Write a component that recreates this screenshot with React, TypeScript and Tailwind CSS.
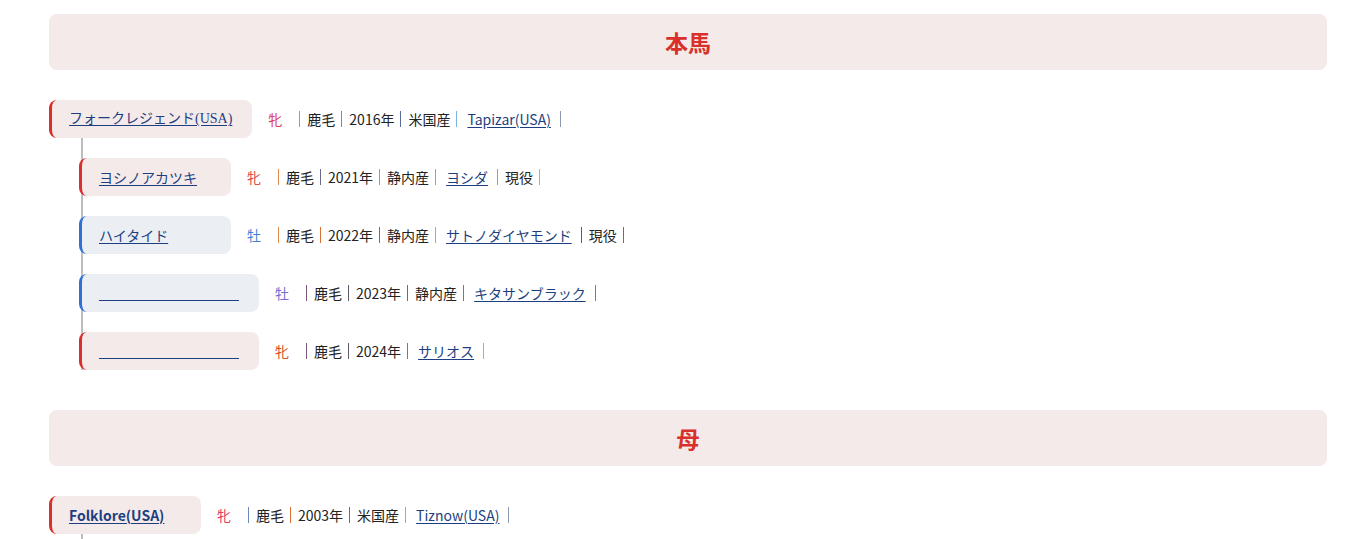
import React from "react";

type Item = { text: string; link?: boolean; sep: string };
type Row = {
  name: string;
  empty?: boolean;
  female: boolean;
  sexColor: string;
  firstSep: string;
  items: Item[];
  lastSep: string;
  nameFont?: "serif" | "bold";
};

const FONT = "font-['Noto_Sans_CJK_JP','Noto_Sans',sans-serif]";

function Sep({ color }: { color: string }) {
  return <span className="inline-block w-px h-[16px]" style={{ backgroundColor: color }} />;
}

function HorseRow({ row }: { row: Row }) {
  const boxCls = row.female
    ? "bg-[#f5eaea] border-[#d9302c]"
    : "bg-[#ebeff4] border-[#2f6fd6]";
  const nameCls =
    row.nameFont === "serif"
      ? "font-['Liberation_Serif','Noto_Sans_CJK_JP',serif]"
      : row.nameFont === "bold"
      ? "font-bold"
      : "";
  return (
    <div className="flex items-center h-[38px]">
      <div
        className={`h-[38px] min-w-[152px] flex items-center pl-[17px] pr-5 rounded-lg border-l-[3px] ${boxCls}`}
      >
        {row.empty ? (
          <a href="#" className="inline-block w-[140px] h-[15px] border-b border-[#1d3f7f]" />
        ) : (
          <a
            href="#"
            className={`text-[14px] leading-[20px] text-[#1d3f7f] underline underline-offset-2 ${nameCls}`}
          >
            {row.name}
          </a>
        )}
      </div>
      <span
        className="ml-4 w-[31px] text-[14px] leading-[20px]"
        style={{ color: row.sexColor }}
      >
        {row.female ? "牝" : "牡"}
      </span>
      <div className="flex items-center text-[14px] leading-[20px] text-[#222]">
        {row.items.map((it, i) => (
          <React.Fragment key={i}>
            <Sep color={i === 0 ? row.firstSep : row.items[i - 1].sep} />
            {it.link ? (
              <a href="#" className="ml-[10px] mr-[9px] text-[#1d3f7f] underline underline-offset-2">
                {it.text}
              </a>
            ) : (
              <span className="pl-[7px] pr-[6px]">{it.text}</span>
            )}
          </React.Fragment>
        ))}
        <Sep color={row.lastSep} />
      </div>
    </div>
  );
}

const parent1: Row = {
  name: "フォークレジェンド(USA)",
  female: true,
  sexColor: "#e0405e",
  firstSep: "#e08a4a",
  nameFont: "serif",
  items: [
    { text: "鹿毛", sep: "#d9703a" },
    { text: "2016年", sep: "#5a6a9a" },
    { text: "米国産", sep: "#7fb2e0" },
    { text: "Tapizar(USA)", link: true, sep: "#8a98b0" },
  ],
  lastSep: "#8a98b0",
};

const children1: Row[] = [
  {
    name: "ヨシノアカツキ",
    female: true,
    sexColor: "#e04a4a",
    firstSep: "#e08a4a",
    items: [
      { text: "鹿毛", sep: "#6a6a8a" },
      { text: "2021年", sep: "#d98a4a" },
      { text: "静内産", sep: "#e0904a" },
      { text: "ヨシダ", link: true, sep: "#e08a4a" },
      { text: "現役", sep: "#e0a070" },
    ],
    lastSep: "#e0a070",
  },
  {
    name: "ハイタイド",
    female: false,
    sexColor: "#3f7fd8",
    firstSep: "#e08a4a",
    items: [
      { text: "鹿毛", sep: "#d9703a" },
      { text: "2022年", sep: "#6a6a8a" },
      { text: "静内産", sep: "#7fb2e0" },
      { text: "サトノダイヤモンド", link: true, sep: "#5a5a6a" },
      { text: "現役", sep: "#8a5a8a" },
    ],
    lastSep: "#8a5a8a",
  },
  {
    name: "",
    empty: true,
    female: false,
    sexColor: "#6f6fd0",
    firstSep: "#7a5a7a",
    items: [
      { text: "鹿毛", sep: "#5a5a6a" },
      { text: "2023年", sep: "#6a6a7a" },
      { text: "静内産", sep: "#8a6a9a" },
      { text: "キタサンブラック", link: true, sep: "#9a6a9a" },
    ],
    lastSep: "#9a6a9a",
  },
  {
    name: "",
    empty: true,
    female: true,
    sexColor: "#d9502a",
    firstSep: "#7a5a7a",
    items: [
      { text: "鹿毛", sep: "#5a5a6a" },
      { text: "2024年", sep: "#8a6a9a" },
      { text: "サリオス", link: true, sep: "#e0a070" },
    ],
    lastSep: "#e0a070",
  },
];

const parent2: Row = {
  name: "Folklore(USA)",
  female: true,
  sexColor: "#e0405e",
  firstSep: "#6a8ac0",
  nameFont: "bold",
  items: [
    { text: "鹿毛", sep: "#d9703a" },
    { text: "2003年", sep: "#6a6a8a" },
    { text: "米国産", sep: "#7fb2e0" },
    { text: "Tiznow(USA)", link: true, sep: "#8a98b0" },
  ],
  lastSep: "#8a98b0",
};

function Header({ title }: { title: string }) {
  return (
    <div className="h-[56px] rounded-lg bg-[#f5eaea] flex items-center justify-center">
      <h2 className="text-[23px] leading-[28px] font-bold text-[#d9302c]">{title}</h2>
    </div>
  );
}

export default function App() {
  return (
    <div className={`w-full h-[539px] overflow-hidden bg-white pt-[14px] pl-[49px] pr-[19px] ${FONT}`}>
      <Header title="本馬" />
      <div className="mt-[30px]">
        <HorseRow row={parent1} />
        <div className="ml-[32px] border-l-2 border-[#bdbdbd] pt-5 flex flex-col gap-5">
          {children1.map((c, i) => (
            <div key={i} className="-ml-[4px]">
              <HorseRow row={c} />
            </div>
          ))}
        </div>
      </div>
      <div className="mt-[40px]">
        <Header title="母" />
      </div>
      <div className="mt-[30px]">
        <HorseRow row={parent2} />
        <div className="ml-[32px] border-l-2 border-[#bdbdbd] h-[40px]" />
      </div>
    </div>
  );
}
